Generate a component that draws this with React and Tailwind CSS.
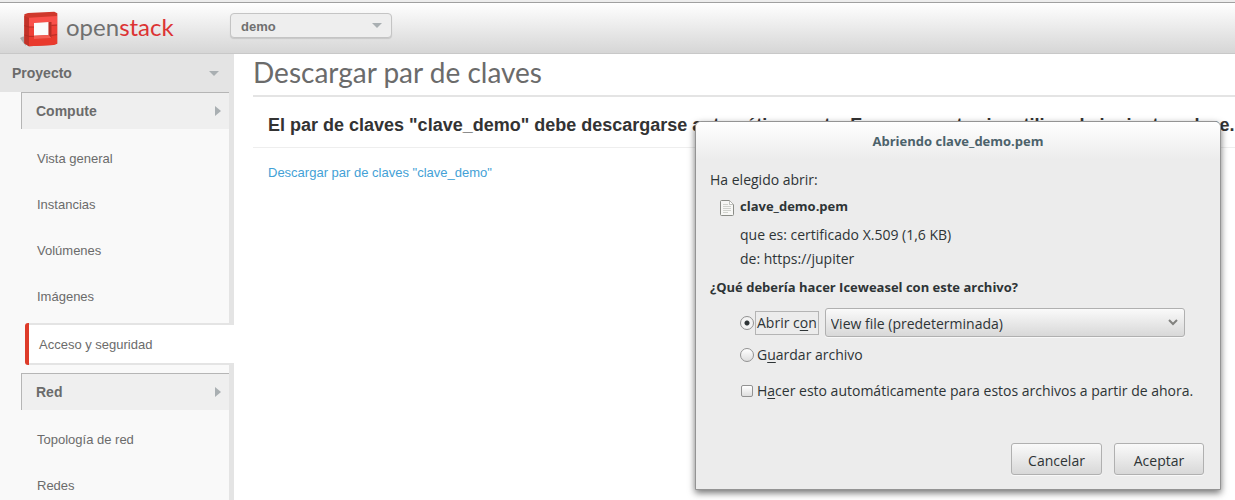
import React from "react";

const computeItems = ["Vista general", "Instancias", "Volúmenes", "Imágenes"];
const networkItems = ["Topología de red", "Redes"];

function Logo() {
  return (
    <a href="#inicio" className="flex w-[210px] items-start pl-5 no-underline" aria-label="openstack">
      <svg viewBox="60 36 120 111" className="mt-2 h-[37px] w-10" aria-hidden="true">
        <path d="M60 117Q66 112 78 111V141Q68 130 60 117Z" fill="#a9a9a9" />
        <path d="M73 46L84 42L163 38L172 43V134L160 138L86 142L73 133Z" fill="#cf382c" />
        <path d="M73 50L87 58V142L73 133Z" fill="#c23228" />
        <path d="M87 56L171 51V78L154 79V69L102 72V84H87Z" fill="#f9504a" />
        <path d="M87 84H102V112H87ZM154 79L171 78V107L154 109Z" fill="#ee3f36" />
        <path d="M87 112H102V120L154 117V109L171 107V134L160 138L87 142Z" fill="#e93a2d" />
        <path d="M102 72L146 69V108L102 110Z" fill="#fbfbfb" />
        <path d="M146 69H154V117L146 108Z" fill="#b53028" />
        <path d="M102 110L146 108L154 117L102 120Z" fill="#f45d53" />
        <path d="M73 80L87 84H102M73 108L87 112H102M154 79L171 78M154 109L171 107" fill="none" stroke="#b52d24" strokeWidth="3" />
      </svg>
      <span className="ml-1.5 mt-1 font-['Lato',sans-serif] text-2xl leading-10 text-[#707070]">
        open<span className="text-[#dc3333]">stack</span>
      </span>
    </a>
  );
}

function SectionHeader({ children }) {
  return (
    <button type="button" className="ml-[21px] flex h-[37px] shrink-0 items-center justify-between self-stretch border-l border-t border-[#b5b5b5] bg-[#efefef] pl-3.5 pr-2 text-sm font-bold text-[#6b6b6b]">
      {children}
      <svg viewBox="0 0 6 10" className="h-2.5 w-1.5" aria-hidden="true"><path d="M0 0L6 5L0 10Z" fill="#a9afb2" /></svg>
    </button>
  );
}

function Items({ names }) {
  return (
    <ul className="mt-1.5">
      {names.map((n) => (
        <li key={n}>
          <a href="#panel" className="flex h-[46px] items-center pl-[37px] pt-0.5 text-[13px] text-[#6b6b6b]">{n}</a>
        </li>
      ))}
    </ul>
  );
}

const control = "border border-[#b0b0b0] bg-linear-to-b from-[#fafafa] to-[#d8d8d8] shadow-[0_1px_0_#f8f8f8]";

function Dialog() {
  return (
    <form
      role="dialog"
      aria-labelledby="dialog-title"
      onSubmit={(e) => e.preventDefault()}
      className="absolute right-3.5 top-[121px] flex w-[526px] flex-col rounded-t-[6px] border border-[#949494] bg-[#ececec] font-['Open_Sans','Noto_Sans',sans-serif] text-sm text-[#2e3436] shadow-[0_3px_7px_rgba(0,0,0,0.55)]"
    >
      <h2 id="dialog-title" className="flex h-[38px] items-center justify-center rounded-t-[5px] bg-linear-to-b from-white to-[#ececec] text-[13px] font-bold text-[#4c626b]">
        Abriendo clave_demo.pem
      </h2>
      <div className="flex flex-col px-3.5 pb-3.5 pr-4">
        <p className="mt-2 leading-6">Ha elegido abrir:</p>
        <div className="mt-0.5 flex items-center pl-2.5 leading-6">
          <svg viewBox="0 0 14 16" className="mr-1.5 mt-1 h-4 w-3.5" aria-hidden="true">
            <path d="M1.5 .5H9.5L13.5 4.5V14.5Q13.5 15.5 12.5 15.5H1.5Q.5 15.5 .5 14.5V1.5Q.5 .5 1.5 .5Z" fill="#f7f7f5" stroke="#8a8c87" />
            <path d="M9.5 .5V4.5H13.5Z" fill="#fff" stroke="#a7a9a4" strokeWidth=".7" />
            <path d="M3 4.5H8M3 6.5H11M3 8.5H11M3 10.5H11M3 12.5H8" stroke="#d0d2cd" />
          </svg>
          <strong className="text-[13px]">clave_demo.pem</strong>
        </div>
        <p className="mt-[5px] pl-[30px] leading-6">que es: certificado X.509 (1,6 KB)</p>
        <p className="pl-[30px] leading-6">de: https://jupiter</p>
        <p className="mt-1 text-[13px] font-bold leading-6">¿Qué debería hacer Iceweasel con este archivo?</p>
        <div className="mt-[9px] flex items-center pl-[30px] pr-[19px]">
          <input id="open" type="radio" name="action" defaultChecked className="h-3.5 w-3.5 appearance-none rounded-full border border-[#929292] bg-linear-to-b from-white to-[#dedede] checked:bg-[radial-gradient(circle,#2e3436_2px,#f3f3f3_3px)]" />
          <label htmlFor="open" className="ml-px flex h-6 items-center whitespace-pre border border-[#b4b4b4] px-px">Abrir c<span className="underline underline-offset-2">o</span>n</label>
          <div className="relative ml-1.5 flex grow">
            <select aria-label="Abrir con" className={`h-[29px] w-full appearance-none rounded-[3px] pl-[5px] pt-0.5 ${control}`}>
              <option>View file (predeterminada)</option>
            </select>
            <svg viewBox="0 0 10 7" className="pointer-events-none absolute right-[7px] top-[11px] h-[7px] w-2.5" aria-hidden="true"><path d="M1 1L5 5L9 1" fill="none" stroke="#82827f" strokeWidth="2" /></svg>
          </div>
        </div>
        <div className="mt-1.5 flex items-center pl-[30px]">
          <input id="save" type="radio" name="action" className="h-3.5 w-3.5 appearance-none rounded-full border border-[#929292] bg-linear-to-b from-white to-[#dedede] checked:bg-[radial-gradient(circle,#2e3436_2px,#f3f3f3_3px)]" />
          <label htmlFor="save" className="ml-[3px] leading-6">G<span className="underline underline-offset-2">u</span>ardar archivo</label>
        </div>
        <div className="mt-3 flex items-center pl-[31px]">
          <input id="always" type="checkbox" className="h-3 w-3 appearance-none rounded-[2px] border border-[#929292] bg-linear-to-b from-white to-[#dedede] checked:bg-[#2e3436]" />
          <label htmlFor="always" className="ml-1 whitespace-nowrap leading-6">H<span className="underline underline-offset-2">a</span>cer esto automáticamente para estos archivos a partir de ahora.</label>
        </div>
        <div className="mt-10 flex justify-end gap-3">
          <button type="button" className={`h-8 w-[91px] rounded-[3px] pt-[3px] ${control}`}>Cancelar</button>
          <button type="submit" className={`h-8 w-[90px] rounded-[3px] pt-[3px] ${control}`}>Aceptar</button>
        </div>
      </div>
    </form>
  );
}

export default function App() {
  return (
    <div className="relative flex h-screen flex-col overflow-hidden bg-white font-['Liberation_Sans',Arial,sans-serif]">
      <div className="h-[3px] shrink-0 border-b border-[#a0a0a0] bg-[#ededed]" />
      <header className="flex h-[51px] shrink-0 items-start border-b border-[#c8c8c8] bg-linear-to-b from-white to-[#d6d6d6]">
        <Logo />
        <div className="relative ml-5 mt-2.5">
          <select aria-label="Proyecto actual" className="h-[25px] w-[162px] appearance-none rounded-[4px] border border-[#c4c4c4] bg-[#eeeeee] pl-2.5 pt-0.5 text-[13px] font-bold text-[#707070] shadow-[0_1px_1px_rgba(0,0,0,0.12)]">
            <option>demo</option>
          </select>
          <svg viewBox="0 0 10 5" className="pointer-events-none absolute right-2.5 top-2.5 h-[5px] w-2.5" aria-hidden="true"><path d="M0 0H10L5 5Z" fill="#a9afb2" /></svg>
        </div>
      </header>
      <div className="flex min-h-0 grow">
        <nav className="flex w-[234px] shrink-0 flex-col border-r-[5px] border-[#e4e4e4] bg-[#f9f9f9]">
          <button type="button" className="-mr-[5px] flex h-[38px] shrink-0 items-center justify-between bg-[#e4e4e4] pl-3 pr-[15px] text-sm font-bold text-[#6b6b6b]">
            Proyecto
            <svg viewBox="0 0 10 5" className="h-[5px] w-2.5" aria-hidden="true"><path d="M0 0H10L5 5Z" fill="#a9afb2" /></svg>
          </button>
          <SectionHeader>Compute</SectionHeader>
          <Items names={computeItems} />
          <a href="#acceso" aria-current="page" className="-mr-[5px] mb-2 ml-[25px] mt-1 flex h-[42px] shrink-0 items-stretch rounded-l-[3px] bg-[#dd3b2a] text-[13px] text-[#6b6b6b]">
            <span className="ml-1 flex grow items-center border-y-2 border-[#e4e4e4] bg-white pl-2.5 pt-0.5">Acceso y seguridad</span>
          </a>
          <SectionHeader>Red</SectionHeader>
          <Items names={networkItems} />
        </nav>
        <main className="min-w-0 grow overflow-hidden pl-[19px]">
          <h1 className="h-[43px] border-b-2 border-[#e4e4e4] font-['Lato',sans-serif] text-[28px] leading-9 text-[#6b6b6b]">Descargar par de claves</h1>
          <h3 className="flex h-[51px] items-center whitespace-nowrap border-b border-[#eeeeee] pb-1 pl-[15px] pt-2.5 text-lg font-bold text-[#333333]">
            El par de claves "clave_demo" debe descargarse automáticamente. En caso contrario, utilice el siguiente enlace.
          </h3>
          <a href="#clave" className="ml-[15px] mt-[15px] inline-block text-[13px] leading-5 text-[#43a1d6]">Descargar par de claves "clave_demo"</a>
        </main>
      </div>
      <Dialog />
    </div>
  );
}
